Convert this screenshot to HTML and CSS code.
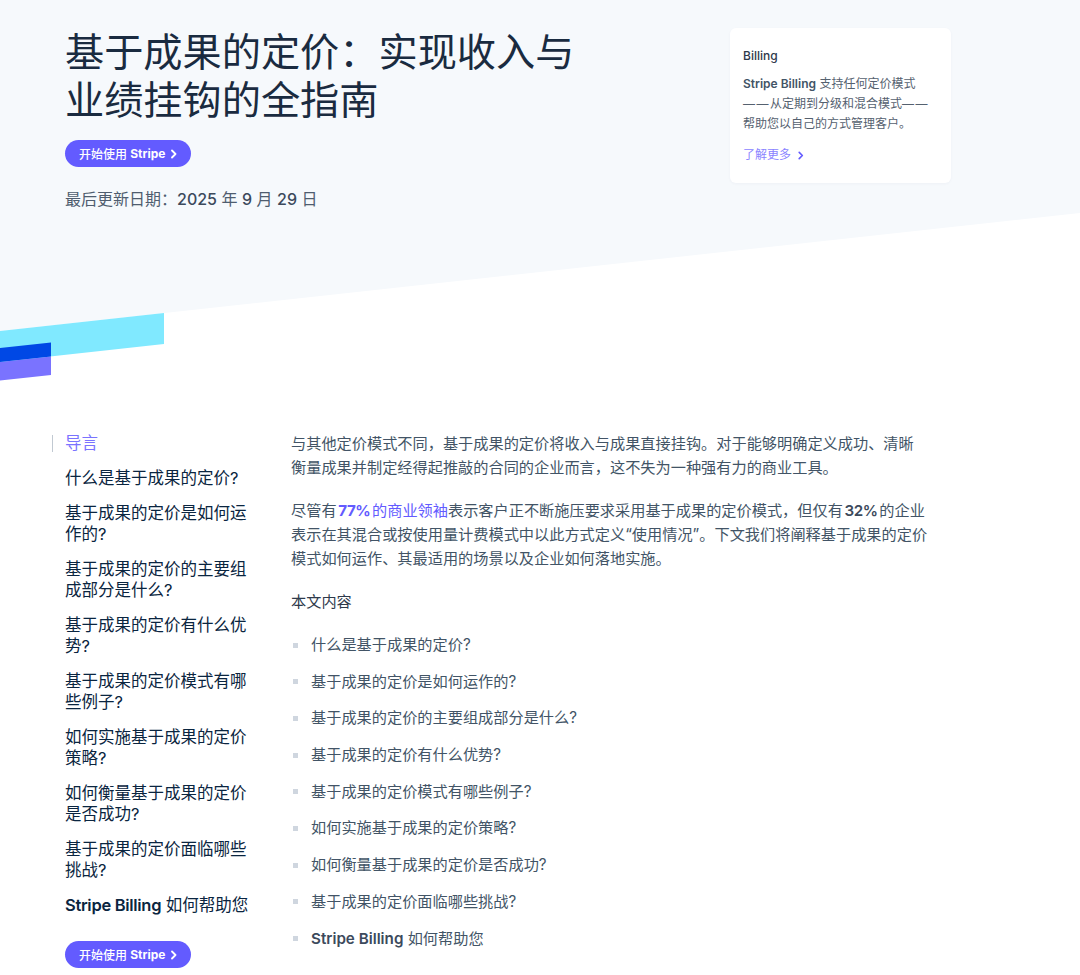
FILE: index.html
```html
<!DOCTYPE html>
<html lang="zh-CN">
<head>
<meta charset="utf-8">
<title>基于成果的定价</title>
<link rel="stylesheet" href="styles.css">
</head>
<body>
<header class="hero">
  <svg class="hero-bg" viewBox="0 0 1080 431" preserveAspectRatio="none" aria-hidden="true">
    <polygon points="0,0 1080,0 1080,213 0,331" fill="#f6f9fc"/>
    <polygon points="0,331 164,313 164,344 0,362" fill="#80e9ff"/>
    <polygon points="0,362 51,356.5 51,375 0,380.5" fill="#7a73ff"/>
    <polygon points="0,348 51,342.5 51,356.5 0,362" fill="#0048e5"/>
  </svg>
  <div class="hero-inner">
    <div class="hero-main">
      <h1 class="title">基于成果的定价：实现收入与业绩挂钩的全指南</h1>
      <a class="btn" href="#">开始使用 <b>Stripe</b><svg class="chev" viewBox="0 0 6 10" aria-hidden="true"><path d="M1 1.5L4.5 5L1 8.5"/></svg></a>
      <p class="updated">最后更新日期：<span class="num">2025</span> 年 <span class="num">9</span> 月 <span class="num">29</span> 日</p>
    </div>
    <aside class="promo">
      <div class="promo-label">Billing</div>
      <p class="promo-text"><b>Stripe Billing</b> 支持任何定价模式<span class="dash">——</span>从定期到分级和混合模式<span class="dash">——</span>帮助您以自己的方式管理客户。</p>
      <a class="promo-link" href="#">了解更多<svg class="chev" viewBox="0 0 6 10" aria-hidden="true"><path d="M1 1.5L4.5 5L1 8.5"/></svg></a>
    </aside>
  </div>
</header>

<div class="article">
  <nav class="toc">
    <ul class="toc-list">
      <li class="toc-item active">导言</li>
      <li class="toc-item">什么是基于成果的定价?</li>
      <li class="toc-item">基于成果的定价是如何运作的?</li>
      <li class="toc-item">基于成果的定价的主要组成部分是什么?</li>
      <li class="toc-item">基于成果的定价有什么优势?</li>
      <li class="toc-item">基于成果的定价模式有哪些例子?</li>
      <li class="toc-item">如何实施基于成果的定价策略?</li>
      <li class="toc-item">如何衡量基于成果的定价是否成功?</li>
      <li class="toc-item">基于成果的定价面临哪些挑战?</li>
      <li class="toc-item"><b>Stripe Billing</b> 如何帮助您</li>
    </ul>
    <a class="btn btn-side" href="#">开始使用 <b>Stripe</b><svg class="chev" viewBox="0 0 6 10" aria-hidden="true"><path d="M1 1.5L4.5 5L1 8.5"/></svg></a>
  </nav>
  <main class="content">
    <p class="para">与其他定价模式不同，基于成果的定价将收入与成果直接挂钩。对于能够明确定义成功、清晰衡量成果并制定经得起推敲的合同的企业而言，这不失为一种强有力的商业工具。</p>
    <p class="para para-stats">尽管有 <a class="link" href="#"><b class="figure">77%</b> 的商业领袖</a>表示客户正不断施压要求采用基于成果的定价模式，但仅有 <b class="strong figure">32%</b> 的企业表示在其混合或按使用量计费模式中以此方式定义“使用情况”。下文我们将阐释基于成果的定价模式如何运作、其最适用的场景以及企业如何落地实施。</p>
    <h2 class="contents-title">本文内容</h2>
    <ul class="contents-list">
      <li><span>什么是基于成果的定价?</span></li>
      <li><span>基于成果的定价是如何运作的?</span></li>
      <li><span>基于成果的定价的主要组成部分是什么?</span></li>
      <li><span>基于成果的定价有什么优势?</span></li>
      <li><span>基于成果的定价模式有哪些例子?</span></li>
      <li><span>如何实施基于成果的定价策略?</span></li>
      <li><span>如何衡量基于成果的定价是否成功?</span></li>
      <li><span>基于成果的定价面临哪些挑战?</span></li>
      <li><span><b class="strong">Stripe Billing</b> 如何帮助您</span></li>
    </ul>
  </main>
</div>
</body>
</html>
```

FILE: styles.css
```css
* { box-sizing: border-box; }

html, body {
  margin: 0;
  padding: 0;
  background: #ffffff;
}

body {
  font-family: Inter, "Noto Sans CJK SC", "Noto Sans", sans-serif;
  color: #425466;
  width: 1080px;
  overflow: hidden;
}

/* ---------- hero ---------- */
.hero {
  position: relative;
  height: 431px;
}

.hero-bg {
  position: absolute;
  left: 0;
  top: 0;
  width: 1080px;
  height: 431px;
  display: block;
}

.hero-inner {
  position: relative;
  display: flex;
  justify-content: space-between;
  align-items: flex-start;
  width: 886px;
  margin-left: 65px;
  padding-top: 28px;
}

.hero-main {
  width: 540px;
}

.title {
  margin: 0;
  font-size: 39.2px;
  line-height: 48px;
  font-weight: 400;
  color: #1a2b40;
  letter-spacing: 0;
}

.btn {
  display: inline-flex;
  align-items: center;
  height: 27px;
  padding: 0 14px;
  border-radius: 14px;
  background: #635bff;
  color: #ffffff;
  font-size: 12px;
  font-weight: 500;
  text-decoration: none;
  white-space: pre;
  margin-top: 16px;
}

.btn b {
  font-weight: 700;
}

.btn .chev {
  width: 6px;
  height: 10px;
  margin-left: 6px;
}

.chev path {
  fill: none;
  stroke: currentColor;
  stroke-width: 1.8;
  stroke-linecap: round;
  stroke-linejoin: round;
}

.updated {
  margin: 20px 0 0;
  font-size: 16px;
  line-height: 24px;
  color: #4f5d6f;
}

.updated .num {
  color: #3c4a5c;
  font-weight: 500;
}

/* ---------- promo card ---------- */
.promo {
  width: 221px;
  background: #ffffff;
  border-radius: 6px;
  padding: 20px 13px 18px;
  box-shadow: 0 1px 3px rgba(50, 50, 93, 0.04);
}

.promo-label {
  font-size: 12px;
  line-height: 16px;
  font-weight: 500;
  color: #2e3a4b;
}

.promo-text {
  margin: 10px 0 0;
  font-size: 12px;
  line-height: 20px;
  color: #55616f;
  width: 192px;
}

.promo-text b {
  font-weight: 600;
  color: #425466;
}

.promo-text .dash {
  letter-spacing: 1.5px;
}

.promo-link {
  display: inline-flex;
  align-items: center;
  margin-top: 11px;
  font-size: 12px;
  line-height: 20px;
  color: #8a84ff;
  text-decoration: none;
}

.promo-link .chev {
  width: 6px;
  height: 9px;
  margin-left: 7px;
  color: #635bff;
}

/* ---------- article ---------- */
.article {
  display: flex;
  gap: 31px;
  margin-left: 65px;
  padding-top: 1px;
}

.toc {
  width: 195px;
  flex: none;
  padding-top: 1px;
}

.toc-list {
  list-style: none;
  margin: 0;
  padding: 0;
  display: flex;
  flex-direction: column;
  gap: 14px;
}

.toc-item {
  position: relative;
  font-size: 16.5px;
  line-height: 21px;
  color: #0a2540;
}

.toc-item b {
  font-weight: 600;
  letter-spacing: -0.3px;
}

.toc-item.active {
  color: #7a73ff;
}

.toc-item.active::before {
  content: "";
  position: absolute;
  left: -13px;
  top: 2px;
  width: 1px;
  height: 17px;
  background: #c1c9d2;
}

.btn-side {
  margin-top: 25px;
}

.content {
  width: 637.5px;
  font-size: 15.2px;
  line-height: 24px;
  color: #425466;
}

.para {
  margin: 0 0 19px;
}

.para-stats {
  word-spacing: -2.5px;
}

.figure {
  letter-spacing: -0.5px;
}

.link {
  color: #635bff;
  text-decoration: none;
}

.link b {
  font-weight: 700;
}

.strong {
  font-weight: 600;
  color: #3c4a5c;
}

.contents-title {
  margin: 0;
  font-size: 15.2px;
  line-height: 24px;
  font-weight: 400;
  color: #2e3a4b;
}

.contents-list {
  list-style: none;
  margin: 19px 0 0;
  padding: 0;
  display: flex;
  flex-direction: column;
  gap: 12.7px;
}

.contents-list li {
  display: flex;
  align-items: center;
  line-height: 24px;
}

.contents-list li::before {
  content: "";
  width: 5px;
  height: 5px;
  background: #cfd6df;
  margin: 0 13px 0 2px;
  flex: none;
}
```
